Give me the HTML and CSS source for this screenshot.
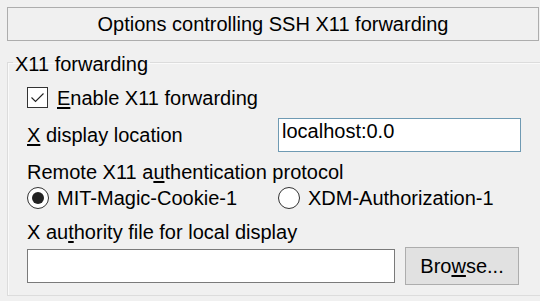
FILE: index.html
```html
<html>

<head>
  <meta charset="UTF-8" />
  <title>X11 forwarding</title>
  <link rel="stylesheet" href="styles.css">
</head>

<body>
  <div class="panel">
    <div class="heading">Options controlling SSH X11 forwarding</div>

    <fieldset class="group">
      <legend class="legend">X11 forwarding</legend>

      <div class="row check-row">
        <span class="checkbox">
          <svg width="21" height="21" viewBox="0 0 21 21">
            <path d="M4.5 10.5 L8.5 14.5 L16.5 6.5" fill="none" stroke="#222" stroke-width="1.1" />
          </svg>
        </span>
        <span class="text"><u>E</u>nable X11 forwarding</span>
      </div>

      <div class="row field-row">
        <span class="text field-label"><u>X</u> display location</span>
        <div class="input active">localhost:0.0</div>
      </div>

      <div class="text section-label">Remote X11 a<u>u</u>thentication protocol</div>

      <div class="row radio-row">
        <span class="option">
          <span class="radio checked"></span>
          <span class="text">MIT-Magic-Cookie-1</span>
        </span>
        <span class="option">
          <span class="radio"></span>
          <span class="text">XDM-Authorization-1</span>
        </span>
      </div>

      <div class="text section-label auth-label">X au<u>t</u>hority file for local display</div>

      <div class="row file-row">
        <div class="input wide"></div>
        <div class="button">Bro<u>w</u>se...</div>
      </div>
    </fieldset>
  </div>
</body>

</html>
```

FILE: styles.css
```css
* {
  margin: 0;
  padding: 0;
  box-sizing: border-box;
}

html,
body {
  width: 100%;
  height: 100%;
  overflow: hidden;
  background-color: #f0f0f0;
}

body {
  font-family: "Liberation Sans", Arial, sans-serif;
  font-size: 20px;
  color: #000;
}

u {
  text-underline-offset: 2px;
}

.panel {
  padding: 7px 0 0 7px;
}

.heading {
  width: 532px;
  height: 34px;
  border: 1px solid #adadad;
  line-height: 32px;
  text-align: center;
}

.group {
  margin-top: 8px;
  margin-right: -20px;
  border: 1px solid #dcdcdc;
  box-shadow: inset 1px 1px 0 #fafafa;
  padding: 0 0 10px 19px;
}

.legend {
  margin-left: -14px;
  padding: 4px 2px 0 2px;
  line-height: 22px;
}

.text {
  line-height: 22px;
  white-space: nowrap;
}

.row {
  display: flex;
}

.check-row {
  margin-top: 12px;
  height: 22px;
  align-items: flex-start;
}

.checkbox {
  width: 21px;
  height: 21px;
  border: 1px solid #333;
  background-color: #fff;
  display: flex;
}

.checkbox svg {
  margin: -1px;
}

.check-row .text {
  margin-left: 9px;
}

.field-row {
  margin-top: 9px;
  align-items: center;
}

.field-label {
  width: 251px;
}

.input {
  height: 34px;
  background-color: #fff;
  border: 1px solid #7a7a7a;
  line-height: 22px;
  padding: 1px 0 0 3px;
}

.input.active {
  width: 243px;
  border-color: #6f9ab3;
}

.input.wide {
  width: 368px;
}

.section-label {
  margin-top: 9px;
}

.radio-row {
  margin-top: 4px;
  height: 22px;
  align-items: center;
}

.option {
  display: flex;
  align-items: center;
  width: 251px;
}

.radio {
  width: 22px;
  height: 22px;
  border: 1px solid #333;
  border-radius: 50%;
  background-color: #fff;
  display: flex;
  align-items: center;
  justify-content: center;
  margin-right: 8px;
}

.radio.checked::after {
  content: "";
  width: 12px;
  height: 12px;
  border-radius: 50%;
  background-color: #222;
}

.auth-label {
  margin-top: 12px;
}

.file-row {
  margin-top: 4px;
  align-items: center;
}

.button {
  margin-left: 10px;
  width: 114px;
  height: 38px;
  border: 1px solid #adadad;
  background-color: #e1e1e1;
  line-height: 36px;
  text-align: center;
}
```
